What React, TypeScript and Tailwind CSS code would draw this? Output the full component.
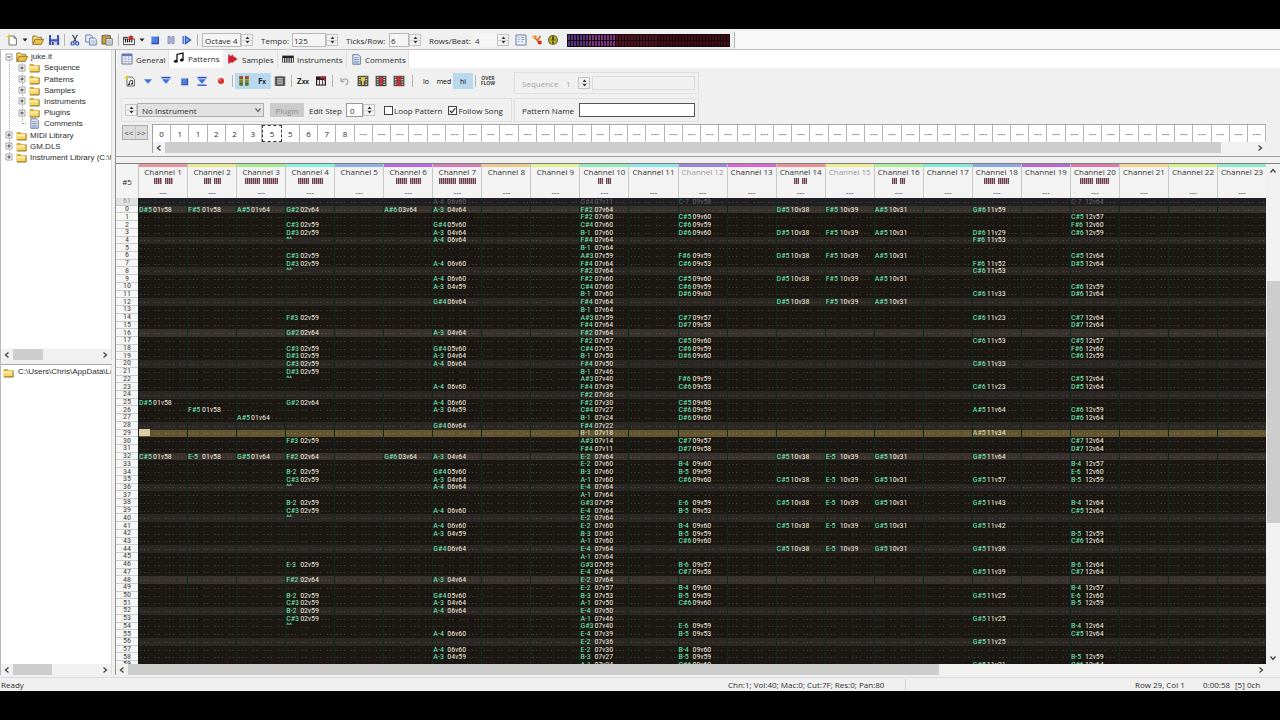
import React from "react";

type Note = [row: number, note: string, ins?: string, vol?: string];

const CHANNELS: { color: string; vu: number; muted?: boolean }[] = [
  { color: "bg-[#e8929c]", vu: 8 }, { color: "bg-[#e6ea8c]", vu: 7 }, { color: "bg-[#a8ec92]", vu: 15 },
  { color: "bg-[#86f0e2]", vu: 11 }, { color: "bg-[#8fb0e2]", vu: 0 }, { color: "bg-[#b868da]", vu: 11 },
  { color: "bg-[#d87ab8]", vu: 17 }, { color: "bg-[#ecca8c]", vu: 0 }, { color: "bg-[#e2f28e]", vu: 0 },
  { color: "bg-[#92ecba]", vu: 5 }, { color: "bg-[#8ae6ea]", vu: 0 }, { color: "bg-[#9a86dc]", vu: 0, muted: true },
  { color: "bg-[#d868d2]", vu: 0 }, { color: "bg-[#e89292]", vu: 5 }, { color: "bg-[#ecec92]", vu: 0, muted: true },
  { color: "bg-[#a8f09a]", vu: 5 }, { color: "bg-[#82ead8]", vu: 0 }, { color: "bg-[#8aa8e4]", vu: 11 },
  { color: "bg-[#b868d2]", vu: 0 }, { color: "bg-[#da78a8]", vu: 13 }, { color: "bg-[#f0d68e]", vu: 0 },
  { color: "bg-[#d2f088]", vu: 0 }, { color: "bg-[#90ecc8]", vu: 0 },
];

const rep = (rows: number[], note: string, ins: string, vol: string): Note[] =>
  rows.map((r) => [r, note, ins, vol]);

const lead = (base: number, hi: string): Note[] =>
  ([[0, "A-3", "04", "64"], [2, hi, "05", "60"], [3, "A-3", "04", "64"], [4, "A-4", "06", "64"],
    [7, "A-4", "06", "60"], [9, "A-4", "06", "60"], [10, "A-3", "04", "59"], [12, hi, "06", "64"]] as Note[])
    .map(([r, n, i, v]) => [r + base, n, i, v]);

const VOLS = [64, 60, 60, 60, 64, 64, 59, 64, 64, 60, 60, 60, 64, 64, 59, 64,
  64, 57, 53, 50, 50, 46, 40, 39, 36, 30, 27, 24, 22, 18, 14, 11];
const BASS_A = ["F#2", "F#2", "C#4", "B-1", "F#4", "B-1", "A#3", "F#4"];
const BASS_B = ["E-2", "E-2", "B-3", "A-1", "E-4", "A-1", "G#3", "E-4"];

const run = (ins: string, s: string): Note[] =>
  s.split(" ").map((t) => {
    const [r, n, v] = t.split(":");
    return [Number(r), n, ins, v];
  });

const DATA: Record<number, Note[]> = {
  1: run("01", "0:D#5:58 25:D#5:58 32:C#5:58"),
  2: run("01", "0:F#5:58 26:F#5:58 32:E-5:58"),
  3: run("01", "0:A#5:64 27:A#5:64 32:G#5:64"),
  4: [
    ...run("02", "0:G#2:64 2:C#3:59 3:D#3:59 6:C#3:59 7:D#3:59 14:F#3:59 16:G#2:64 18:C#3:59 19:D#3:59 20:C#3:59 21:D#3:59 25:G#2:64 30:F#3:59 32:F#2:64 34:B-2:59 35:C#3:59 38:B-2:59 39:C#3:59 46:E-3:59 48:F#2:64 50:B-2:59 51:C#3:59 52:B-2:59 53:C#3:59"),
    ...[4, 8, 22, 36, 40, 54].map((r): Note => [r, "^^"]),
  ],
  6: run("03", "0:A#6:64 32:G#6:64"),
  7: [[-1, "A-4", "06", "60"], ...lead(0, "G#4"), ...lead(16, "G#4"), ...lead(32, "G#4"), ...lead(48, "G#4")],
  10: [
    [-1, "G#4", "07", "11"],
    ...Array.from({ length: 60 }, (_, r): Note =>
      [r, (r < 32 ? BASS_A : BASS_B)[r % 8], "07", String(VOLS[r % 32])]),
  ],
  12: run("09", "-1:C-7:58 1:C#5:60 2:C#6:59 3:D#6:60 6:F#6:59 7:C#6:53 9:C#5:60 10:C#6:59 11:D#6:60 14:C#7:57 15:D#7:58 17:C#5:60 18:C#6:59 19:D#6:60 22:F#6:59 23:C#6:53 25:C#5:60 26:C#6:59 27:D#6:60 30:C#7:57 31:D#7:58 33:B-4:60 34:B-5:59 35:C#6:60 38:E-6:59 39:B-5:53 41:B-4:60 42:B-5:59 43:C#6:60 46:B-6:57 47:C#7:58 49:B-4:60 50:B-5:59 51:C#6:60 54:E-6:59 55:B-5:53 57:B-4:60 58:B-5:59 59:C#6:60"),
  14: [...rep([0, 3, 6, 9, 12], "D#5", "10", "38"), ...rep([32, 35, 38, 41, 44], "C#5", "10", "38")],
  15: [...rep([0, 3, 6, 9, 12], "F#5", "10", "39"), ...rep([32, 35, 38, 41, 44], "E-5", "10", "39")],
  16: [...rep([0, 3, 6, 9, 12], "A#5", "10", "31"), ...rep([32, 35, 38, 41, 44], "G#5", "10", "31")],
  18: run("11", "0:G#6:59 3:D#6:29 4:F#6:53 7:F#6:52 8:C#6:53 11:C#6:33 14:C#6:23 17:C#6:53 20:C#6:33 23:C#6:23 26:A#5:64 29:A#5:34 32:G#5:64 35:G#5:57 38:G#5:43 41:G#5:42 44:G#5:36 47:G#5:39 50:G#5:25 53:G#5:25 56:G#5:25 59:G#5:21"),
  20: run("12", "-1:C-7:64 1:C#5:57 2:F#6:60 3:C#6:59 6:C#5:64 7:D#5:64 10:C#6:59 11:D#6:64 14:C#7:64 15:D#7:64 17:C#5:57 18:F#6:60 19:C#6:59 22:C#5:64 23:D#5:64 26:C#6:59 27:D#6:64 30:C#7:64 31:D#7:64 33:B-4:57 34:E-6:60 35:B-5:59 38:B-4:64 39:C#5:64 42:B-5:59 43:C#6:64 46:B-6:64 47:C#7:64 49:B-4:57 50:E-6:60 51:B-5:59 54:B-4:64 55:C#5:64 58:B-5:59 59:C#6:64"),
};

const LOOKUP = new Map<string, Note>();
Object.entries(DATA).forEach(([ch, notes]) => notes.forEach((n) => LOOKUP.set(`${ch}/${n[0]}`, n)));

const ROWS = Array.from({ length: 61 }, (_, i) => i - 1);
const PLAY_ROW = 29;

function rowColor(r: number) {
  if (r === PLAY_ROW) return "bg-[#62552f]";
  if (r === -1) return "bg-[#201f21]";
  if (r % 16 === 0) return "bg-[#37322e]";
  if (r % 4 === 0) return "bg-[#2b2724]";
  return "bg-[#1b1713]";
}

function Cell({ ch, row }: { ch: number; row: number }) {
  const n = LOOKUP.get(`${ch}/${row}`);
  const dots = row === PLAY_ROW ? "text-[#b8a460]" : "text-[#7c736a]";
  const dim = row === -1;
  const noteColor = dim ? "text-[#5c5c60]" : row === PLAY_ROW ? "text-[#cfd8b0]" : "text-[#74ecba]";
  const valColor = dim ? "text-[#66666a]" : "text-[#f0e9dc]";
  const cursor = ch === 1 && row === PLAY_ROW;
  return (
    <td className="flex min-w-0 flex-1 items-center border-l border-[#0d2a1d] p-0 whitespace-pre">
      {n ? (
        <>
          <span className={`w-[14px] shrink-0 ${noteColor}`}>{n[1]}</span>
          {n[2] ? (
            <span className={`w-5 shrink-0 ${valColor}`}>{n[2]}<small className="text-[7px]">v</small>{n[3]}</span>
          ) : (
            <span className={`w-5 shrink-0 text-[6px] ${dots}`}>{".. ..."}</span>
          )}
          <span className={`font-['Liberation_Mono',monospace] text-[6px] ${dots}`}>...</span>
        </>
      ) : (
        <span className={`font-['Liberation_Mono',monospace] text-[6px] ${dots}`}>
          <span className={cursor ? "bg-[#dccba4] text-[#dccba4]" : ""}>...</span>
          {" .. ... ..."}
        </span>
      )}
    </td>
  );
}

function Spin({ label }: { label: string }) {
  return (
    <span className="flex h-3 w-3 shrink-0 flex-col border border-[#c4c4c4] bg-[#f2f2f2]">
      <button aria-label={`${label} up`} className="flex flex-1 items-center justify-center border-b border-[#d0d0d0]">
        <svg width="5" height="3" viewBox="0 0 5 3"><path d="M0.5 3L2.5 0.5L4.5 3z" fill="#333" /></svg>
      </button>
      <button aria-label={`${label} down`} className="flex flex-1 items-center justify-center">
        <svg width="5" height="3" viewBox="0 0 5 3"><path d="M0.5 0L2.5 2.5L4.5 0z" fill="#333" /></svg>
      </button>
    </span>
  );
}

const Chev = ({ d, c = "#444" }: { d: "l" | "r" | "u" | "d"; c?: string }) => (
  <svg width="6" height="6" viewBox="0 0 6 6" fill="none" stroke={c} strokeWidth="1.3">
    <path d={{ l: "M4.5 0.5L1.5 3L4.5 5.5", r: "M1.5 0.5L4.5 3L1.5 5.5", u: "M0.5 4.5L3 1.5L5.5 4.5", d: "M0.5 1.5L3 4.5L5.5 1.5" }[d]} />
  </svg>
);

function HScroll({ label, thumb, className = "" }: { label: string; thumb: string; className?: string }) {
  return (
    <div role="group" aria-label={label} className={`flex h-[11px] shrink-0 items-stretch bg-[#f1f1f1] ${className}`}>
      <button aria-label="Scroll left" className="flex w-3 items-center justify-center"><Chev d="l" /></button>
      <div className="flex-1"><div className={`h-full bg-[#cdcdcd] ${thumb}`} /></div>
      <button aria-label="Scroll right" className="flex w-3 items-center justify-center"><Chev d="r" /></button>
    </div>
  );
}

const G = ({ children, s = 12 }: { children: React.ReactNode; s?: number }) => (
  <svg width={s} height={s} viewBox="0 0 12 12" className="shrink-0">{children}</svg>
);

const Folder = () => (
  <G s={11}>
    <path d="M0.7 2.2h4l1 1.3h5.6v7.3H0.7z" fill="#d9a93a" />
    <path d="M0.7 4.4h10.6v5.4H0.7z" fill="#f6d76a" />
    <path d="M1.2 4.8h9v2h-9z" fill="#fdf0ac" />
    <path d="M11 4v7H1" fill="none" stroke="#7a5f1c" strokeWidth="0.8" />
  </G>
);
const FolderOpen = () => (
  <G>
    <path d="M0.8 10V2h3.7l1 1.3h4V5" fill="#f6dc7a" stroke="#7d6420" strokeWidth="0.8" />
    <path d="M0.8 10.4L3 5.3h8.6L9.3 10.4z" fill="#eebf44" stroke="#7d6420" strokeWidth="0.8" />
  </G>
);
const Doc = () => (
  <G s={11}>
    <path d="M2 0.8h6l2.2 2.2v8.2H2z" fill="#e4ecf8" stroke="#55658a" strokeWidth="0.9" />
    <path d="M3.4 4h5M3.4 6h5.2M3.4 8h5.2M3.4 9.8h5.2" stroke="#6c86b4" strokeWidth="0.9" />
  </G>
);
const Sheet = () => (
  <G>
    <path d="M1 1h10v10H1z" fill="#f4f6fc" stroke="#55658a" strokeWidth="0.9" />
    <path d="M1 1h10v2.2H1z" fill="#5a78c4" />
    <path d="M4.3 3v8M7.6 3v8M1 6h10M1 8.5h10" stroke="#a0acc8" strokeWidth="0.7" />
  </G>
);
const SongProps = () => (
  <G>
    <path d="M1 1h10v10H1z" fill="#f6f9ff" stroke="#55709a" strokeWidth="0.9" />
    <path d="M2.6 3.4h2M2.6 5.6h2M2.6 7.8h2M6 3.4h3.6M6 5.6h3.6M6 7.8h2" stroke="#6c8cc8" strokeWidth="0.9" />
  </G>
);
const NewDoc = () => (
  <G>
    <path d="M3 2h5l2.4 2.4V11H3z" fill="#fff" stroke="#666" strokeWidth="0.9" />
    <path d="M8 2v2.4h2.4" fill="none" stroke="#666" strokeWidth="0.8" />
    <path d="M2.8 0l0.9 1.9 2 0.6-2 0.8-0.9 2-0.9-2L0 2.6l1.8-0.8z" fill="#e8c81c" />
  </G>
);
const NewPattern = () => (
  <G>
    <path d="M3 2h5l2.4 2.4V11H3z" fill="#fff" stroke="#555" strokeWidth="0.9" />
    <path d="M2.8 0l0.9 1.9 2 0.6-2 0.8-0.9 2-0.9-2L0 2.6l1.8-0.8z" fill="#e8c81c" />
    <path d="M5.6 9.4V6l3-0.6v3.4" fill="none" stroke="#222" strokeWidth="0.8" /><circle cx="5" cy="9.4" r="0.9" /><circle cx="8" cy="8.8" r="0.9" />
  </G>
);
const Arrow = () => <svg width="6" height="4" viewBox="0 0 6 4"><path d="M0.5 0.5h5L3 3.5z" fill="#222" /></svg>;
const Save = () => (
  <G>
    <path d="M1 1h9.4l0.8 0.8V11H1z" fill="#3d55b0" />
    <path d="M3 1h6v4.2H3z" fill="#e8ecf8" /><path d="M3 7.4h6V11H3z" fill="#c4cce4" /><path d="M4 8h1.6v3H4z" fill="#2b3f8c" />
  </G>
);
const Cut = () => (
  <G>
    <path d="M3.6 0.8L7.4 8M8.4 0.8L4.6 8" stroke="#445" strokeWidth="1.2" />
    <circle cx="3.6" cy="9.4" r="1.6" fill="none" stroke="#2f56b8" strokeWidth="1.2" />
    <circle cx="8.2" cy="9.4" r="1.6" fill="none" stroke="#2f56b8" strokeWidth="1.2" />
  </G>
);
const Copy = () => (
  <G>
    <path d="M0.8 1h5l1.6 1.6V8H0.8z" fill="#eef3fd" stroke="#5470a8" strokeWidth="0.9" />
    <path d="M4.6 4h5l1.6 1.6V11H4.6z" fill="#eef3fd" stroke="#5470a8" strokeWidth="0.9" />
    <path d="M6 7h3.6M6 9h3.6" stroke="#7c96c8" strokeWidth="0.8" />
  </G>
);
const Paste = () => (
  <G>
    <path d="M1 1.6h8.4V10H1z" fill="#c8a040" stroke="#6c5420" strokeWidth="0.9" />
    <path d="M3 0.6h4.2v2H3z" fill="#8a8a8a" />
    <path d="M5 4.6h6.2V11H5z" fill="#f2f4fa" stroke="#555" strokeWidth="0.8" /><path d="M6.2 7h3.8M6.2 9h3.8" stroke="#667" strokeWidth="0.7" />
  </G>
);
const Midi = () => (
  <G>
    <path d="M0.4 5h11.2v5.6H0.4z" fill="#fff" stroke="#333" strokeWidth="0.9" />
    <path d="M2.6 5v3.4M4.6 5v3.4M6.6 5v3.4M8.8 5v3.4" stroke="#222" strokeWidth="1.2" />
    <path d="M0.4 5V3.4h5" stroke="#333" fill="none" />
    <circle cx="8" cy="3.8" r="2.3" fill="#d42a2a" />
  </G>
);
const StopIcon = ({ s = 12 }: { s?: number }) => <G s={s}><path d="M2.4 2.6h7v7h-7z" fill="#4f7de0" /><path d="M2.4 9.6h7v-7" fill="none" stroke="#2a4ca4" strokeWidth="1.2" /></G>;
const Pause = () => <G><path d="M3 2.6h2.2v7H3zM6.8 2.6H9v7H6.8z" fill="#b4c0dc" stroke="#7484b0" strokeWidth="0.8" /></G>;
const Play = () => <G><path d="M2.2 2v8M4.4 2.4L9.6 6L4.4 9.8z" fill="#6e9cf4" stroke="#2b56c0" strokeWidth="1.2" /></G>;
const TriDown = ({ bar, bot }: { bar?: boolean; bot?: boolean }) => (
  <G>
    {bar && <path d="M1.4 2.6h9.2" stroke="#2b56c8" strokeWidth="1.6" />}
    {bot && <path d="M1.4 10.2h9.2" stroke="#2b56c8" strokeWidth="1.4" />}
    <path d="M2 4.2h8L6 8.8z" fill="#3f6fe0" />
  </G>
);
const Rec = () => <G><circle cx="6" cy="6" r="3" fill="#dc2c24" /><circle cx="5.2" cy="5" r="1" fill="#f49088" /></G>;
const Mixer = () => (
  <G>
    <path d="M1.4 1h3.6v10H1.4zM7 1h3.6v10H7z" fill="#5f8c34" />
    <path d="M1.4 1h3.6v2.4H1.4zM7 1h3.6v2.4H7z" fill="#b84838" /><path d="M1.4 3.4h3.6v3.4H1.4zM7 3.4h3.6v3.4H7z" fill="#c8a028" />
    <path d="M1.4 3.4h3.6M1.4 6h3.6M1.4 8.6h3.6M7 3.4h3.6M7 6h3.6M7 8.6h3.6" stroke="#4b4b2c" strokeWidth="0.7" />
  </G>
);
const Film = () => (
  <G>
    <path d="M0.8 1.4h10.4v9.4H0.8z" fill="#333" /><path d="M3 2.8h6v6.6H3z" fill="#bdbdbd" />
    <path d="M3 4.4h6M3 6h6M3 7.6h6" stroke="#666" strokeWidth="0.7" />
    <path d="M1.9 1.4v9.4M10.1 1.4v9.4" stroke="#ddd" strokeWidth="0.9" strokeDasharray="1 1" />
  </G>
);
const Keys = () => (
  <G>
    <path d="M1 1.4h10v9.2H1z" fill="#2b1a1e" /><path d="M2.2 5h2v4.6h-2zM5 5h2v4.6H5zM7.8 5h2v4.6h-2z" fill="#f2eef0" /><path d="M5.5 3l4-1.2v4" stroke="#d02a3a" strokeWidth="1.4" fill="none" />
  </G>
);
const Undo = () => <G><path d="M2 3v3.6h3.4M2.4 6.2C5 2.6 9.6 3.6 8.8 7.4C8.5 8.8 7.6 9.8 6.6 10.2" fill="none" stroke="#a9a9ad" strokeWidth="1.3" /></G>;
const Grid3 = ({ kind }: { kind: "y" | "r" | "x" }) => (
  <G>
    <path d="M0.6 0.8h10.8v10.4H0.6z" fill="#4a4a40" />
    <path d="M1.8 2.2h1.8M1.8 4.6h1.8M1.8 7h1.8M1.8 9.4h1.8M8.4 2.2h1.8M8.4 4.6h1.8M8.4 7h1.8M8.4 9.4h1.8" stroke="#cfcfc0" strokeWidth="1.1" />
    {kind === "y" && <path d="M4 2h4v3.4L6.8 6.6V10H5V6.6L4 5.4z" fill="#e8c83c" />}
    {kind === "r" && <path d="M6 1.2l2.8 3.2H7v3.2h1.8L6 10.8L3.2 7.6H5V4.4H3.2z" fill="#d42f44" />}
    {kind === "x" && <path d="M2.2 1.6h7.6L6.6 6l3.2 4.4H2.2L5.4 6z" fill="#c82c40" />}
  </G>
);
const NoteIcon = () => (
  <G><path d="M4 9V2.4L10 1v6.8" fill="none" stroke="#111" strokeWidth="1.3" /><ellipse cx="2.8" cy="9.3" rx="1.9" ry="1.5" fill="#111" /><ellipse cx="8.8" cy="8.1" rx="1.9" ry="1.5" fill="#111" /></G>
);
const Wave = () => <G><path d="M2 1.4v9.2M3.6 3v6.6M5.2 1.8v8M6.8 3.4v5.4M8.4 4.6v3" stroke="#cc1f30" strokeWidth="1.6" /><path d="M1.4 6h9" stroke="#cc1f30" strokeWidth="1" /></G>;
const Piano = () => <G><path d="M0.2 2.6h11.6v7H0.2z" fill="#222" /><path d="M1.6 5v4.4M3.8 5v4.4M6 5v4.4M8.2 5v4.4M10.4 5v4.4" stroke="#fff" strokeWidth="1" /></G>;
const Plug = () => (
  <G><path d="M2 2l4 4M5 1.4L4 5M9.6 2L6.4 6.4L9 10" stroke="#d8691c" strokeWidth="1.7" fill="none" /><circle cx="8.8" cy="8.6" r="2" fill="#c8381c" /><circle cx="3" cy="3" r="1.6" fill="#f0a83c" /></G>
);
const Info = () => (
  <G><circle cx="6" cy="6" r="5" fill="#6d6b1c" /><circle cx="6" cy="6" r="3.8" fill="#bdb734" /><path d="M6 2.6v3.8M6 7.6v1.8" stroke="#2a2a10" strokeWidth="1.6" /><path d="M2.6 6h6.8" stroke="#5e5b14" strokeWidth="0.8" /></G>
);

function IconBtn({ label, on, w = "w-4", children }: { label: string; on?: boolean; w?: string; children: React.ReactNode }) {
  return (
    <button aria-label={label} className={`flex h-4 shrink-0 items-center justify-center ${w} ${on ? "bg-[#b8d8f0]" : ""}`}>
      {children}
    </button>
  );
}
const Sep = () => <span className="mx-[2px] h-3 w-px shrink-0 bg-[#b4b4b4]" />;
const WideSep = () => <span className="mx-1 h-3 w-px shrink-0 bg-[#b4b4b4]" />;

function Meter() {
  return (
    <svg className="h-[13px] w-[163px] shrink-0" viewBox="0 0 163 13" aria-label="Output level">
      <rect width="163" height="13" fill="#1c0810" />
      {Array.from({ length: 54 }, (_, i) =>
        [1, 7].map((y) => (
          <rect key={`${i}-${y}`} x={1 + i * 3} y={y} width="2" height="5"
            fill={i < 16 ? (i < 7 ? "#4f3880" : "#78387e") : i < 30 ? "#501422" : "#3e0e14"} />
        )),
      )}
    </svg>
  );
}

const TREE: [string, number, "o" | "f" | "d"][] = [
  ["juke.it", 0, "o"], ["Sequence", 1, "f"], ["Patterns", 1, "f"], ["Samples", 1, "f"], ["Instruments", 1, "f"],
  ["Plugins", 1, "f"], ["Comments", 1, "d"], ["MIDI Library", 0, "f"], ["GM.DLS", 0, "f"], ["Instrument Library (C:\\Us", 0, "f"],
];

function Sidebar() {
  return (
    <aside className="flex w-[112px] shrink-0 flex-col gap-1 border-l border-[#b8b8b8] font-['Liberation_Sans',sans-serif]">
      <div className="flex h-[310px] flex-col border-r border-[#dcdcdc] bg-white pt-px">
        <ul className="relative flex h-28 flex-col overflow-hidden">
          <li aria-hidden="true" className="absolute top-2 bottom-2 left-2 border-l border-dotted border-[#aaa]" />
          <li aria-hidden="true" className="absolute top-3 bottom-[39px] left-[21px] border-l border-dotted border-[#aaa]" />
          {TREE.map(([name, depth, icon]) => (
            <li key={name} className={`relative flex min-h-0 flex-1 items-center gap-[3px] whitespace-nowrap ${depth ? "pl-[17px]" : "pl-1"}`}>
              {icon === "d" ? (
                <span className="ml-1 w-1 shrink-0 border-t border-dotted border-[#999]" />
              ) : (
                <svg width="8" height="8" viewBox="0 0 8 8" className="shrink-0">
                  <path d="M1 1h6v6H1z" fill="#fff" stroke="#999" strokeWidth="0.9" />
                  <path d={icon === "o" ? "M2.2 4h3.6" : "M2.2 4h3.6M4 2.2v3.6"} stroke="#333" strokeWidth="0.9" />
                </svg>
              )}
              {icon === "o" ? <FolderOpen /> : icon === "d" ? <Doc /> : <Folder />}
              <span className={depth ? "pl-px" : ""}>{name}</span>
            </li>
          ))}
        </ul>
        <div className="flex-1" />
        <HScroll label="Tree scroll" thumb="w-[35%]" />
      </div>
      <div className="flex min-h-0 flex-1 flex-col border-t border-r border-t-[#a8a8a8] border-r-[#dcdcdc] bg-white">
        <div className="flex flex-1 items-start gap-1 overflow-hidden pt-px pl-[2px] whitespace-nowrap">
          <span className="mt-px"><Folder /></span>
          <span>C:\Users\Chris\AppData\Lo</span>
        </div>
        <HScroll label="File scroll" thumb="w-[45%]" />
      </div>
    </aside>
  );
}

function TopBar() {
  return (
    <header className="flex h-[21px] shrink-0 items-center overflow-hidden border-b border-[#c0c0c0] pt-[2px] pl-1">
      <IconBtn label="New"><NewDoc /></IconBtn>
      <IconBtn label="New options" w="w-[10px]"><Arrow /></IconBtn>
      <IconBtn label="Open"><FolderOpen /></IconBtn>
      <IconBtn label="Save"><Save /></IconBtn>
      <Sep />
      <IconBtn label="Cut"><Cut /></IconBtn>
      <IconBtn label="Copy"><Copy /></IconBtn>
      <IconBtn label="Paste"><Paste /></IconBtn>
      <span className="w-px" />
      <Sep />
      <IconBtn label="MIDI record"><Midi /></IconBtn>
      <IconBtn label="MIDI options" w="w-[10px]"><Arrow /></IconBtn>
      <IconBtn label="Stop"><StopIcon /></IconBtn>
      <IconBtn label="Pause"><Pause /></IconBtn>
      <IconBtn label="Play"><Play /></IconBtn>
      <Sep />
      <input aria-label="Base octave" defaultValue="Octave 4" className="ml-[2px] h-[14px] w-[39px] border border-[#b8b8b8] bg-[#f5f5f5] px-[2px]" />
      <Spin label="Octave" />
      <label htmlFor="tempo" className="ml-2 w-[31px]">Tempo:</label>
      <input id="tempo" defaultValue="125" className="h-[14px] w-[34px] border border-[#b8b8b8] bg-[#f5f5f5] px-px" />
      <Spin label="Tempo" />
      <label htmlFor="ticks" className="ml-2 w-[43px] whitespace-nowrap">Ticks/Row:</label>
      <input id="ticks" defaultValue="6" className="h-[14px] w-5 border border-[#b8b8b8] bg-[#f5f5f5] px-px" />
      <Spin label="Ticks per row" />
      <label htmlFor="rows" className="ml-2 w-[45px] whitespace-nowrap">Rows/Beat:</label>
      <input id="rows" defaultValue="4" className="h-[14px] w-[23px] bg-[#f5f5f5] px-px" />
      <Spin label="Rows per beat" />
      <span className="w-1" />
      <IconBtn label="Song properties"><SongProps /></IconBtn>
      <IconBtn label="Plugin manager"><Plug /></IconBtn>
      <IconBtn label="About"><Info /></IconBtn>
      <span className="w-[6px]" />
      <Meter />
      <span className="ml-1 h-4 w-px bg-[#b0b0b0]" />
      <span className="h-full flex-1 bg-[#f8f8f8]" />
    </header>
  );
}

const TABS: [string, () => React.JSX.Element, string][] = [
  ["General", Sheet, "w-[52px]"], ["Patterns", NoteIcon, "w-[54px]"], ["Samples", Wave, "w-[55px]"],
  ["Instruments", Piano, "w-[69px]"], ["Comments", Doc, "w-[62px]"],
];

function Controls() {
  return (
    <section className="flex flex-col border-b border-[#a0a0a0] bg-[#f0f0f0]">
      <nav role="tablist" className="flex h-[18px] bg-white pl-px">
        {TABS.map(([t, Icon, w]) => (
          <button key={t} role="tab" aria-selected={t === "Patterns"}
            className={`flex items-center gap-[3px] pl-1 ${w} ${t === "Patterns" ? "bg-white pb-[2px]" : "border-r border-[#e0e0e0] bg-[#f0f0f0]"}`}>
            <Icon />{t}
          </button>
        ))}
      </nav>
      <div className="flex h-[26px] items-center pl-[5px]">
        <IconBtn w="w-[18px]" label="New pattern"><NewPattern /></IconBtn>
        <IconBtn w="w-[18px]" label="Play pattern"><TriDown /></IconBtn>
        <IconBtn w="w-[18px]" label="Play from start"><TriDown bar /></IconBtn>
        <IconBtn w="w-[18px]" label="Stop pattern"><StopIcon s={11} /></IconBtn>
        <IconBtn w="w-[18px]" label="Play row"><TriDown bar bot /></IconBtn>
        <IconBtn w="w-[19px]" label="Record"><Rec /></IconBtn>
        <Sep />
        <IconBtn w="w-[18px]" on label="VU meters"><Mixer /></IconBtn>
        <IconBtn w="w-[18px]" on label="Plugin names"><b className="text-[8px]">F<small>x</small></b></IconBtn>
        <IconBtn w="w-[18px]" label="Channel manager"><Film /></IconBtn>
        <Sep />
        <IconBtn w="w-[18px]" label="MIDI macros"><b className="text-[8px]">Z<small>xx</small></b></IconBtn>
        <IconBtn w="w-[18px]" label="Chord editor"><Keys /></IconBtn>
        <Sep />
        <IconBtn w="w-[19px]" label="Undo"><Undo /></IconBtn>
        <IconBtn w="w-[18px]" label="Pattern properties"><Grid3 kind="y" /></IconBtn>
        <IconBtn w="w-[18px]" label="Expand"><Grid3 kind="r" /></IconBtn>
        <IconBtn w="w-[18px]" label="Shrink"><Grid3 kind="x" /></IconBtn>
        <WideSep />
        <IconBtn w="w-[18px]" label="Low detail"><span className="text-[7px] text-black">lo</span></IconBtn>
        <IconBtn w="w-[18px]" label="Medium detail"><span className="text-[7px] text-black">med</span></IconBtn>
        <IconBtn w="w-5" on label="High detail"><span className="text-[7px] text-black">hi</span></IconBtn>
        <Sep />
        <IconBtn w="w-5" label="Overflow paste"><span className="text-[5px] leading-[5px] font-bold text-[#444]">OVER<br />FLOW</span></IconBtn>
        <div className="ml-4 flex h-[22px] w-[185px] items-center self-end border border-[#e0e0e0] pl-[7px] text-[#a4a4a4]">
          <label htmlFor="seq" className="w-[42px]">Sequence</label>
          <input id="seq" disabled defaultValue="1" className="h-3 w-[14px] bg-transparent px-[2px]" />
          <Spin label="Sequence" />
          <input aria-label="Sequence name" disabled className="ml-[2px] h-[14px] w-[103px] border border-[#dadada]" />
        </div>
      </div>
      <div className="mt-[2px] flex h-[26px] items-end pl-[5px]">
        <div className="flex h-6 w-[391px] items-center border border-[#e0e0e0] pl-[3px]">
          <Spin label="Instrument" />
          <span className="relative flex">
            <select aria-label="Instrument" className="h-[14px] w-[127px] appearance-none border border-[#adadad] bg-[#e1e1e1] px-1">
              <option>No Instrument</option>
            </select>
            <span className="pointer-events-none absolute top-1 right-[3px]"><Chev d="d" c="#666" /></span>
          </span>
          <button disabled className="ml-[6px] h-[14px] w-[34px] bg-[#cbcbcb] text-[#8e8e8e]">Plugin</button>
          <label htmlFor="step" className="ml-[5px] w-[37px] whitespace-nowrap">Edit Step</label>
          <input id="step" defaultValue="0" className="h-[14px] w-[17px] border border-[#999] bg-white px-[3px]" />
          <Spin label="Edit step" />
          <Check id="loop" label="Loop Pattern" ml="ml-[9px]" />
          <Check id="follow" label="Follow Song" checked ml="ml-[6px]" />
        </div>
        <div className="ml-[2px] flex h-6 w-[185px] items-center border border-[#e0e0e0] pl-[7px]">
          <label htmlFor="pname" className="w-[57px] whitespace-nowrap">Pattern Name</label>
          <input id="pname" className="h-[14px] w-[116px] border border-[#555] bg-white" />
        </div>
      </div>
      <div className="mt-[2px] flex pl-[6px]">
        <div className="mt-px flex h-[15px] w-[26px] shrink-0 border border-[#adadad] bg-[#dcdcdc] text-[8px] text-[#444]">
          <button aria-label="Previous sequence" className="flex-1 border-r border-[#c4c4c4]">&lt;&lt;</button>
          <button aria-label="Next sequence" className="flex-1">&gt;&gt;</button>
        </div>
        <div className="ml-1 flex min-w-0 flex-1 flex-col border-l border-[#a0a0a0]">
          <ol className="mr-[14px] flex h-[18px] border-t border-[#a8a8a8] bg-white">
            {Array.from({ length: 61 }, (_, i) => (
              <li key={i} className={`flex min-w-0 flex-1 items-center justify-center border-r ${i === 6 ? "border border-dashed border-[#333]" : "border-[#b4b4b4]"} ${i > 10 ? "font-bold text-[#9a9a9a]" : "text-[#2c2c2c]"}`}>
                {i > 10 ? "---" : [0, 1, 1, 2, 2, 3, 5, 5, 6, 7, 8][i]}
              </li>
            ))}
          </ol>
          <HScroll label="Order list scroll" thumb="w-[97%]" className="mr-[14px]" />
        </div>
      </div>
      <div className="h-[3px]" />
    </section>
  );
}

function Check({ id, label, checked, ml }: { id: string; label: string; checked?: boolean; ml: string }) {
  return (
    <span className={`flex items-center gap-px whitespace-nowrap ${ml}`}>
      <span className="relative flex">
        <input id={id} type="checkbox" defaultChecked={checked} className="peer h-[9px] w-[9px] appearance-none border border-[#444] bg-white" />
        <svg className="pointer-events-none absolute inset-0 hidden peer-checked:block" width="9" height="9" viewBox="0 0 9 9">
          <path d="M1.8 4.6l1.9 2L7.4 2.2" fill="none" stroke="#222" strokeWidth="1.1" />
        </svg>
      </span>
      <label htmlFor={id}>{label}</label>
    </span>
  );
}

function Vu({ w }: { w: number }) {
  const bars = Math.ceil(w / 2);
  return (
    <svg width={w * 2 + 3} height="6" viewBox={`0 0 ${w * 2 + 3} 6`}>
      {[0, w + 3].map((x0) => (
        <g key={x0}>
          <rect x={x0} width={w} height="6" fill="#c09aa4" />
          {Array.from({ length: bars }, (_, i) => (
            <rect key={i} x={x0 + i * 2} width="1" height="6" fill="#634452" />
          ))}
        </g>
      ))}
    </svg>
  );
}

function Pattern() {
  return (
    <section className="flex min-h-0 flex-1 flex-col border-t border-[#808080]">
      <div className="flex min-h-0 flex-1">
        <div className="min-w-0 flex-1 overflow-hidden bg-[#1b1713]">
          <table className="block w-full">
            <thead className="block bg-[#f3f3f4]">
              <tr className="flex h-[34px]">
                <th className="flex w-[22px] shrink-0 items-center justify-center text-[8px] font-normal">#5</th>
                {CHANNELS.map((c, i) => (
                  <th key={i} className="flex min-w-0 flex-1 flex-col items-center border-l border-[#c8c8c8] font-normal whitespace-nowrap">
                    <span className={`h-[3px] w-full shrink-0 ${c.color}`} />
                    <span className={`leading-[10px] ${c.muted ? "text-[#999]" : "text-[#333]"}`}>Channel {i + 1}</span>
                    <span className="flex h-2 items-center">{c.vu > 0 && <Vu w={c.vu} />}</span>
                    <span className="pt-px leading-[11px]">---</span>
                  </th>
                ))}
              </tr>
            </thead>
            <tbody className="flex h-[471px] flex-col font-['Liberation_Sans_Narrow','Roboto_Condensed','Liberation_Mono',monospace] text-[8px] leading-none">
              {ROWS.map((r) => (
                <tr key={r} className={`flex min-h-0 flex-1 ${rowColor(r)}`}>
                  <th scope="row" className={`flex w-[22px] shrink-0 items-center justify-center border-b border-[#cccccc] font-normal ${r < 0 ? "bg-[#e0e0e0] text-[#999]" : "bg-[#f6f6f6] text-[#444]"}`}>
                    {r < 0 ? 61 : r}
                  </th>
                  {CHANNELS.map((_, i) => <Cell key={i} ch={i + 1} row={r} />)}
                </tr>
              ))}
            </tbody>
          </table>
        </div>
        <div className="flex w-[14px] shrink-0 flex-col items-center bg-[#f1f1f1]">
          <button aria-label="Scroll up" className="flex h-[13px] items-center"><Chev d="u" /></button>
          <div className="flex w-full flex-1 flex-col">
            <div className="h-[22%]" />
            <div className="ml-px h-[51%] bg-[#cdcdcd]" />
          </div>
          <button aria-label="Scroll down" className="flex h-[13px] items-center"><Chev d="d" /></button>
        </div>
      </div>
      <HScroll label="Pattern scroll" thumb="w-[72%]" className="pr-[13px]" />
    </section>
  );
}

export default function App() {
  return (
    <div className="flex h-screen flex-col overflow-hidden bg-black py-[29px] font-['Open_Sans','Noto_Sans',sans-serif] text-[8px] leading-[11px] text-[#2c2c2c]">
      <div className="flex min-h-0 flex-1 flex-col bg-[#f0f0f0]">
        <TopBar />
        <div className="flex min-h-0 flex-1">
          <Sidebar />
          <main className="ml-[3px] flex min-w-0 flex-1 flex-col gap-[6px] border-l border-[#909090]">
            <Controls />
            <Pattern />
          </main>
        </div>
        <footer className="mt-[2px] flex h-[14px] shrink-0 items-center border-t border-[#dcdcdc] pl-px whitespace-nowrap">
          <span className="flex-1">Ready</span>
          <span className="w-[178px] border-r border-[#d4d4d4]">Chn:1; Vol:40; Mac:0; Cut:7F; Res:0; Pan:80</span>
          <span className="w-[229px]" />
          <span className="w-[68px]">Row 29, Col 1</span>
          <span className="w-8">0:00:58</span>
          <span className="w-[45px]">[5] 0ch</span>
        </footer>
      </div>
    </div>
  );
}
